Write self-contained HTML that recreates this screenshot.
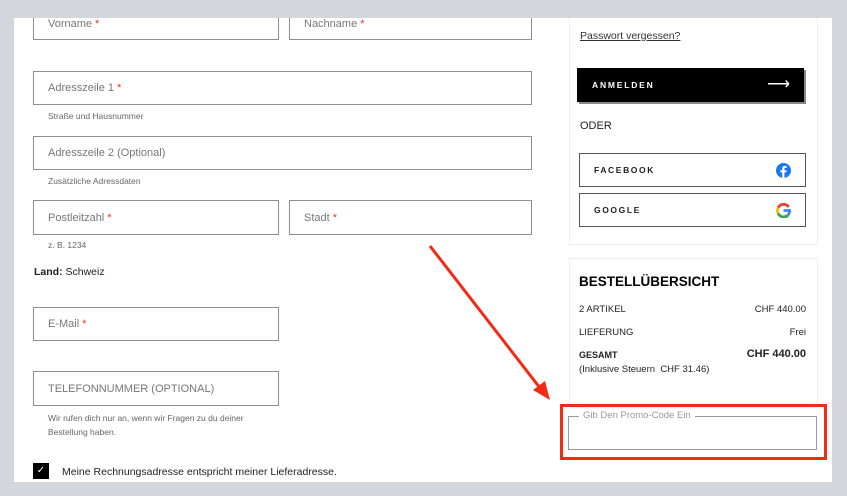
<!DOCTYPE html>
<html><head><meta charset="utf-8"><style>
*{margin:0;padding:0;box-sizing:border-box}
body{width:847px;height:496px;background:#d3d6dd;position:relative;overflow:hidden;font-family:"Liberation Sans",Arial,sans-serif;color:#222}
.a{position:absolute}
.main{left:14px;top:18px;width:818px;height:464px;background:#fff}
.inp{position:absolute;border:1px solid #8e8e8e;background:#fff;font-size:11px;color:#777;padding-left:14px;display:flex;align-items:center}
.inp b{color:#e32;font-weight:normal;margin-left:3px}
.hint{position:absolute;font-size:8.5px;color:#666}
.sm{font-size:9.5px;color:#222}
.btn{position:absolute;border:1px solid #555;background:#fff;font-size:8.5px;font-weight:bold;letter-spacing:1.6px;padding-left:14px;display:flex;align-items:center}
</style></head><body>
<div class="a main"></div>
<div class="inp" style="left:33px;top:6px;width:246px;height:34px;padding-top:2px">Vorname<b>*</b></div>
<div class="inp" style="left:289px;top:6px;width:243px;height:34px;padding-top:2px">Nachname<b>*</b></div>
<div class="a" style="left:0;top:0;width:847px;height:18px;background:#d3d6dd"></div>
<div class="inp" style="left:33px;top:71px;width:499px;height:34px">Adresszeile 1<b>*</b></div>
<div class="hint" style="left:48px;top:111px">Straße und Hausnummer</div>
<div class="inp" style="left:33px;top:136px;width:499px;height:34px">Adresszeile 2 (Optional)</div>
<div class="hint" style="left:48px;top:176px">Zusätzliche Adressdaten</div>
<div class="inp" style="left:33px;top:200px;width:246px;height:35px">Postleitzahl<b>*</b></div>
<div class="inp" style="left:289px;top:200px;width:243px;height:35px">Stadt<b>*</b></div>
<div class="hint" style="left:48px;top:240px">z. B. 1234</div>
<div class="a" style="left:34px;top:266px;font-size:10.5px"><b>Land:</b> Schweiz</div>
<div class="inp" style="left:33px;top:307px;width:246px;height:34px">E-Mail<b>*</b></div>
<div class="inp" style="left:33px;top:371px;width:246px;height:35px">TELEFONNUMMER (OPTIONAL)</div>
<div class="hint" style="left:48px;top:411px;line-height:14px">Wir rufen dich nur an, wenn wir Fragen zu du deiner<br>Bestellung haben.</div>
<div class="a" style="left:33px;top:463px;width:16px;height:16px;background:#000;color:#fff;font-size:10px;text-align:center;line-height:16px">✓</div>
<div class="a" style="left:62px;top:466px;font-size:10.5px">Meine Rechnungsadresse entspricht meiner Lieferadresse.</div>

<div class="a" style="left:569px;top:18px;width:249px;height:227px;border:1px solid #eee;border-top:none"></div>
<div class="a" style="left:580px;top:30px;font-size:10.5px;text-decoration:underline;color:#333">Passwort vergessen?</div>
<div class="a" style="left:579px;top:70px;width:227px;height:34px;background:#888"></div>
<div class="a" style="left:577px;top:68px;width:227px;height:34px;background:#000;color:#fff;font-size:8.5px;font-weight:bold;letter-spacing:1.8px;padding-left:15px;line-height:34px">ANMELDEN<span style="position:absolute;right:14px;top:0;font-size:16px;letter-spacing:0;font-weight:normal">⟶</span></div>
<div class="a" style="left:580px;top:120px;font-size:11px">ODER</div>
<div class="btn" style="left:579px;top:153px;width:227px;height:34px">FACEBOOK
<svg class="a" style="right:14px;top:9px" width="15" height="15" viewBox="0 0 16 16"><circle cx="8" cy="8" r="8" fill="#1877f2"/><path d="M9 16V10h2l.3-2.3H9V6.3c0-.7.2-1.1 1.1-1.1h1.2V3.1c-.3 0-1-.1-1.8-.1-1.8 0-2.9 1-2.9 3v1.7h-2V10h2v6z" fill="#fff"/></svg></div>
<div class="btn" style="left:579px;top:193px;width:227px;height:34px">GOOGLE
<svg class="a" style="right:14px;top:9px" width="15" height="15" viewBox="0 0 16 16" fill="none" stroke-width="3"><path d="M13.5 4.3A6.5 6.5 0 0 0 2.3 5" stroke="#ea4335"/><path d="M2.3 5a6.5 6.5 0 0 0 0 6" stroke="#fbbc05"/><path d="M2.3 11a6.5 6.5 0 0 0 10.5 2" stroke="#34a853"/><path d="M12.8 13A6.5 6.5 0 0 0 14.5 8H8" stroke="#4285f4"/></svg></div>

<div class="a" style="left:569px;top:258px;width:249px;height:150px;border:1px solid #eee"></div>
<div class="a" style="left:579px;top:274px;font-size:13.5px;font-weight:bold;color:#000">BESTELLÜBERSICHT</div>
<div class="a sm" style="left:579px;top:304px">2 ARTIKEL</div><div class="a sm" style="right:41px;top:304px">CHF 440.00</div>
<div class="a sm" style="left:579px;top:327px">LIEFERUNG</div><div class="a sm" style="right:41px;top:327px">Frei</div>
<div class="a sm" style="left:579px;top:350px;font-weight:bold;font-size:9px">GESAMT</div><div class="a" style="right:41px;top:348px;font-size:11px;font-weight:bold">CHF 440.00</div>
<div class="a sm" style="left:579px;top:364px">(Inklusive Steuern&nbsp; CHF 31.46)</div>
<div class="a" style="left:560px;top:404px;width:267px;height:56px;border:3px solid #f32b14"></div>
<div class="a" style="left:568px;top:416px;width:249px;height:34px;border:1px solid #999"></div>
<div class="a" style="left:579px;top:410px;background:#fff;padding:0 4px;font-size:9.5px;color:#999">Gib Den Promo-Code Ein</div>
<svg class="a" style="left:0;top:0" width="847" height="496"><line x1="430" y1="246" x2="540" y2="388" stroke="#f32b14" stroke-width="3"/><polygon points="550,400 533,390 545,381" fill="#f32b14"/></svg>
</body></html>
